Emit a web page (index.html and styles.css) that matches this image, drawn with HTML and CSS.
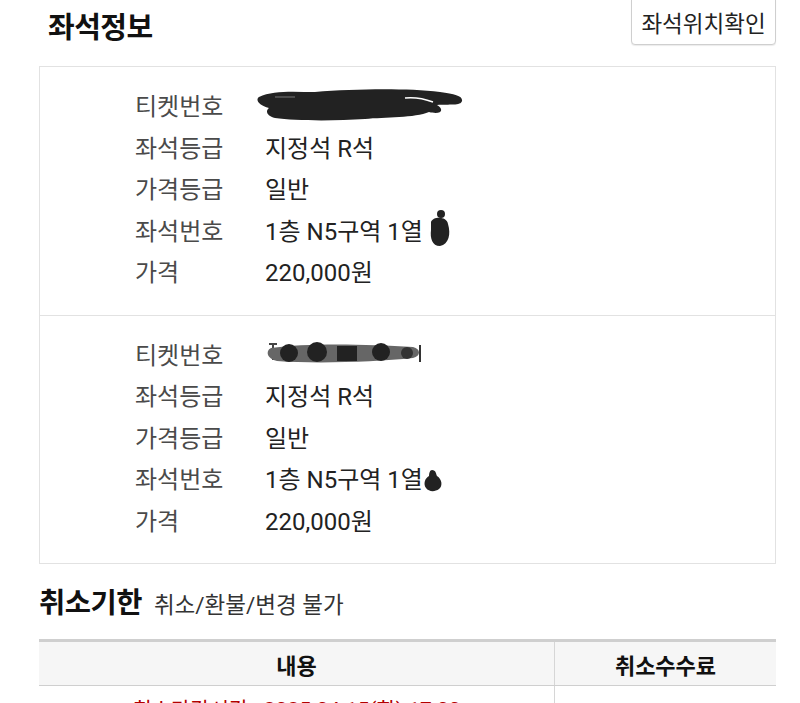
FILE: index.html
```html
<!DOCTYPE html>
<html lang='ko'>
<head>
	<meta charset='UTF-8'>
	<meta name='viewport' content='width=device-width, initial-scale=1.0'>
	<title>좌석정보</title>
	<link rel="stylesheet" href="styles.css">
</head>
<body>
	<div class='page'>
		<div class='head-row'>
			<div class='title seat-title'>좌석정보</div>
			<button class='seat-map-btn'>좌석위치확인</button>
		</div>

		<div class='seat-box'>
			<div class='ticket'>
				<div class='row'><span class='label'>티켓번호</span>
					<span class='value'>
						<svg class='mask mask-1' width='212' height='32' viewBox='0 0 212 32'>
							<path d='M4 8 C18 1 40 3 60 3 C100 0 150 -1 185 3 C200 5 208 7 207 12 C206 17 194 15 182 16 C190 21 186 26 174 23 C160 29 130 28 110 30 C80 32 40 32 20 29 C12 27 10 22 14 19 C4 16 0 11 4 8 Z' fill='#222'/>
							<path d='M150 9 C160 8 170 10 178 13' stroke='#fff' stroke-width='1.5' fill='none'/>
							<path d='M20 8 L40 8' stroke='#777' stroke-width='1' fill='none'/>
						</svg>
					</span>
				</div>
				<div class='row'><span class='label'>좌석등급</span><span class='value'>지정석 R석</span></div>
				<div class='row'><span class='label'>가격등급</span><span class='value'>일반</span></div>
				<div class='row'><span class='label'>좌석번호</span>
					<span class='value'>1층 N5구역 1열
						<svg class='blob blob-1' width='24' height='40' viewBox='0 0 24 40'>
							<circle cx='14' cy='6' r='4' fill='#222'/>
							<path d='M4 14 C6 8 20 8 21 16 C24 26 22 36 13 38 C5 38 3 30 4 22 Z' fill='#222'/>
						</svg>
					</span>
				</div>
				<div class='row'><span class='label'>가격</span><span class='value'>220,000원</span></div>
			</div>
			<div class='ticket'>
				<div class='row'><span class='label'>티켓번호</span>
					<span class='value'>
						<svg class='mask mask-2' width='160' height='26' viewBox='0 0 160 26'>
							<path d='M4 4 L12 4 M8 4 L8 20' stroke='#444' stroke-width='2'/>
							<path d='M6 8 C40 3 100 4 148 7 C156 9 156 16 148 18 C110 22 50 24 12 21 C2 19 0 11 6 8 Z' fill='#666'/>
							<circle cx='24' cy='13' r='9' fill='#222'/>
							<circle cx='52' cy='12' r='10' fill='#222'/>
							<path d='M72 21 L72 6 L92 6 L92 21 Z' fill='#222'/>
							<circle cx='116' cy='12' r='9' fill='#222'/>
							<circle cx='142' cy='13' r='6' fill='#333'/>
							<path d='M155 5 L155 22' stroke='#333' stroke-width='2'/>
						</svg>
					</span>
				</div>
				<div class='row'><span class='label'>좌석등급</span><span class='value'>지정석 R석</span></div>
				<div class='row'><span class='label'>가격등급</span><span class='value'>일반</span></div>
				<div class='row'><span class='label'>좌석번호</span>
					<span class='value'>1층 N5구역 1열<svg class='blob blob-2' width='20' height='24' viewBox='0 0 20 24'>
							<path d='M9 2 C13 2 13 6 14 8 C19 11 20 18 16 21 C12 24 6 24 3 20 C0 16 2 10 6 8 C6 5 7 2 9 2 Z' fill='#222'/>
						</svg></span>
				</div>
				<div class='row'><span class='label'>가격</span><span class='value'>220,000원</span></div>
			</div>
		</div>

		<div class='cancel-head'>
			<span class='title'>취소기한</span>
			<span class='cancel-note'>취소/환불/변경 불가</span>
		</div>

		<table class='cancel-table'>
			<thead>
				<tr><th class='col-content'>내용</th><th class='col-fee'>취소수수료</th></tr>
			</thead>
			<tbody>
				<tr><td class='deadline'>취소마감시간 : 2025.04.15(화) 17:00</td><td></td></tr>
			</tbody>
		</table>
	</div>
</body>
</html>
```

FILE: styles.css
```css
html, body{
	margin:0;
	padding:0;
	background-color:white;
	font-family:Roboto, "Noto Sans CJK KR", "Noto Sans", sans-serif;
	color:#222;
}
.page{
	padding:0 24px 0 39px;
}
.head-row{
	display:flex;
	justify-content:space-between;
	align-items:flex-start;
	height:66px;
}
.title{
	font-size:29px;
	font-weight:bold;
	color:#111;
	letter-spacing:-.5px;
}
.seat-title{
	margin:8px 0 0 9px;
	line-height:40px;
}
.seat-map-btn{
	width:145px;
	height:46px;
	margin-top:-1px;
	padding:0;
	font-family:inherit;
	font-size:22.5px;
	color:#222;
	background-color:white;
	border:1px solid #cfcfcf;
	border-radius:0 0 4px 4px;
	box-shadow:0 1px 1px rgba(0,0,0,.08);
}
.seat-box{
	border:1px solid #e2e2e2;
}
.ticket{
	padding:17px 0 23px 95px;
}
.ticket + .ticket{
	border-top:1px solid #e2e2e2;
}
.row{
	display:flex;
	align-items:center;
	height:41.5px;
	font-size:24px;
}
.label{
	width:130px;
	flex:0 0 130px;
	color:#4a4a4a;
}
.value{
	display:flex;
	align-items:center;
	color:#222;
}
.mask{
	display:block;
}
.mask-1{
	margin:1px 0 0 -10px;
}
.mask-2{
	margin:0 0 0 0;
}
.blob{
	display:block;
}
.blob-1{
	margin:-3px 0 0 4px;
}
.blob-2{
	margin:4px 0 0 0;
}
.cancel-head{
	display:flex;
	align-items:baseline;
	margin-top:22px;
	height:36px;
	line-height:36px;
}
.cancel-head .title{
	font-size:28.5px;
}
.cancel-note{
	margin-left:12px;
	font-size:22.5px;
	color:#333;
}
.cancel-table{
	width:100%;
	margin-top:17px;
	border-collapse:collapse;
	border-top:3px solid #cfcfcf;
}
.cancel-table th{
	height:43px;
	padding:0;
	font-size:22px;
	font-weight:bold;
	color:#111;
	background-color:#f6f6f6;
	border-bottom:1px solid #cfcfcf;
}
.col-content{
	width:515px;
	border-right:1px solid #d6d6d6;
}
.cancel-table td{
	height:44px;
	padding:0;
	text-align:center;
	font-size:21px;
}
.cancel-table td + td{
	border-left:1px solid #d6d6d6;
}
.deadline{
	color:#b30000;
}
```
